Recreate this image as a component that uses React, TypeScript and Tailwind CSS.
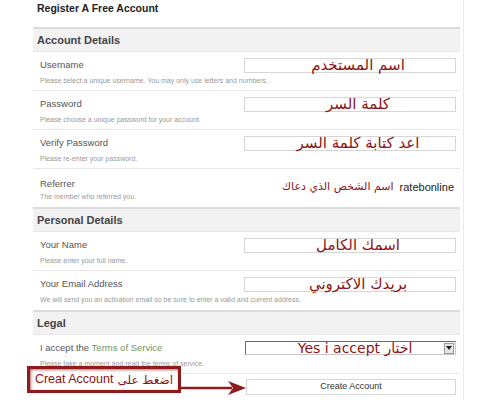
const ar = { fontFamily: '"DejaVu Sans", "Noto Sans", sans-serif' };

const SectionHeader = ({ title }: { title: string }) => (
  <div className="h-[25px] flex items-center pl-[4px] bg-[#f2f2f2] border-t-2 border-[#dcdcdc] border-b border-b-[#e6e6e6] text-[11px] font-bold text-[#444]">
    {title}
  </div>
);

interface RowProps {
  label: React.ReactNode;
  hint: string;
  children?: React.ReactNode;
  last?: boolean;
}

const Row = ({ label, hint, children, last }: RowProps) => (
  <div className={`h-[39px] pl-[7px] pr-[4px] pt-[6px] ${last ? "" : "border-b border-[#e8e8e8]"}`}>
    <div className="flex justify-between items-center h-[14px]">
      <span className="text-[9.5px] text-[#555]">{label}</span>
      {children}
    </div>
    <div className="mt-[4px] text-[7px] text-[#999] whitespace-nowrap">{hint}</div>
  </div>
);

const ArInput = ({ text }: { text: string }) => (
  <div className="relative z-10 w-[212px] h-[15px] border border-[#d6d6d6] bg-white flex items-center justify-center">
    <span dir="rtl" className="text-[15px] leading-none text-[#8b1414] pl-[16px]" style={ar}>
      {text}
    </span>
  </div>
);

export default function App() {
  return (
    <div className="relative w-[500px] h-[400px] overflow-hidden bg-white" style={{ fontFamily: '"Liberation Sans", Arial, sans-serif' }}>
      <div className="w-[464px] h-[400px] border-r border-[#ececec] pl-[33px] pr-[3px]">
        <div className="h-[27px] pl-[4px] pt-[1px] text-[10.5px] font-bold text-[#222]">Register A Free Account</div>

        <SectionHeader title="Account Details" />
        <Row label="Username" hint="Please select a unique username. You may only use letters and numbers.">
          <ArInput text="اسم المستخدم" />
        </Row>
        <Row label="Password" hint="Please choose a unique password for your account.">
          <ArInput text="كلمة السر" />
        </Row>
        <Row label="Verify Password" hint="Please re-enter your password.">
          <ArInput text="اعد كتابة كلمة السر" />
        </Row>
        <div className="h-[38px] pl-[7px] pr-[6px] pt-[8px] flex justify-between">
          <div>
            <div className="text-[9.5px] text-[#555]">Referrer</div>
            <div className="mt-[1px] text-[7px] text-[#999]">The member who referred you.</div>
          </div>
          <div className="flex items-center gap-[6px] h-[16px] mt-[2px]">
            <span dir="rtl" className="text-[11px] text-[#8b1414]" style={ar}>اسم الشخص الذي دعاك</span>
            <span className="text-[11px] text-[#222]">ratebonline</span>
          </div>
        </div>

        <SectionHeader title="Personal Details" />
        <Row label="Your Name" hint="Please enter your full name.">
          <ArInput text="اسمك الكامل" />
        </Row>
        <Row label="Your Email Address" hint="We will send you an activation email so be sure to enter a valid and current address." last>
          <ArInput text="بريدك الاكتروني" />
        </Row>

        <SectionHeader title="Legal" />
        <Row
          label={
            <>
              I accept the <span className="text-[#6f9460]">Terms of Service</span>
            </>
          }
          hint="Please take a moment and read the terms of service."
        >
          <div className="w-[211px] h-[14px] border border-[#6a6a6a] border-r-[#c8c8c8] border-b-[#c8c8c8] bg-white flex items-center">
            <div className="flex-1 flex justify-center pl-[20px]">
              <span className="text-[14px] leading-none text-[#8b1414] whitespace-nowrap" style={ar}>
                Yes i accept <span dir="rtl">اختار</span>
              </span>
            </div>
            <div className="w-[10px] h-[11px] mr-[1px] bg-[#e4e4e4] border border-[#9a9a9a] flex items-center justify-center">
              <svg width="6" height="4" viewBox="0 0 6 4">
                <path d="M0 0 H6 L3 4 Z" fill="#222" />
              </svg>
            </div>
          </div>
        </Row>
        <div className="flex justify-end pr-[4px] pt-[5px]">
          <div className="w-[210px] h-[16px] border border-[#d6d6d6] bg-white flex items-center justify-center text-[9px] text-[#333]">
            Create Account
          </div>
        </div>
      </div>

      <div className="absolute left-[27px] top-[366px] w-[154px] h-[27px] border-[3px] border-[#8e1c1c] bg-white shadow-[inset_1px_1px_3px_rgba(120,20,20,0.6)] flex items-center justify-center whitespace-nowrap">
        <span className="text-[12.5px] text-[#8b1414] leading-none">Creat Account</span>
        <span dir="rtl" className="ml-[4px] text-[12px] text-[#8b1414] leading-none" style={ar}>
          اضغط على
        </span>
      </div>
      <svg className="absolute left-[180px] top-[380px]" width="68" height="16" viewBox="0 0 68 16">
        <line x1="0" y1="8" x2="52" y2="8" stroke="#8e1c1c" strokeWidth="2.5" />
        <path d="M48 1 L66 8 L48 15 L53 8 Z" fill="#8e1c1c" />
      </svg>
    </div>
  );
}
